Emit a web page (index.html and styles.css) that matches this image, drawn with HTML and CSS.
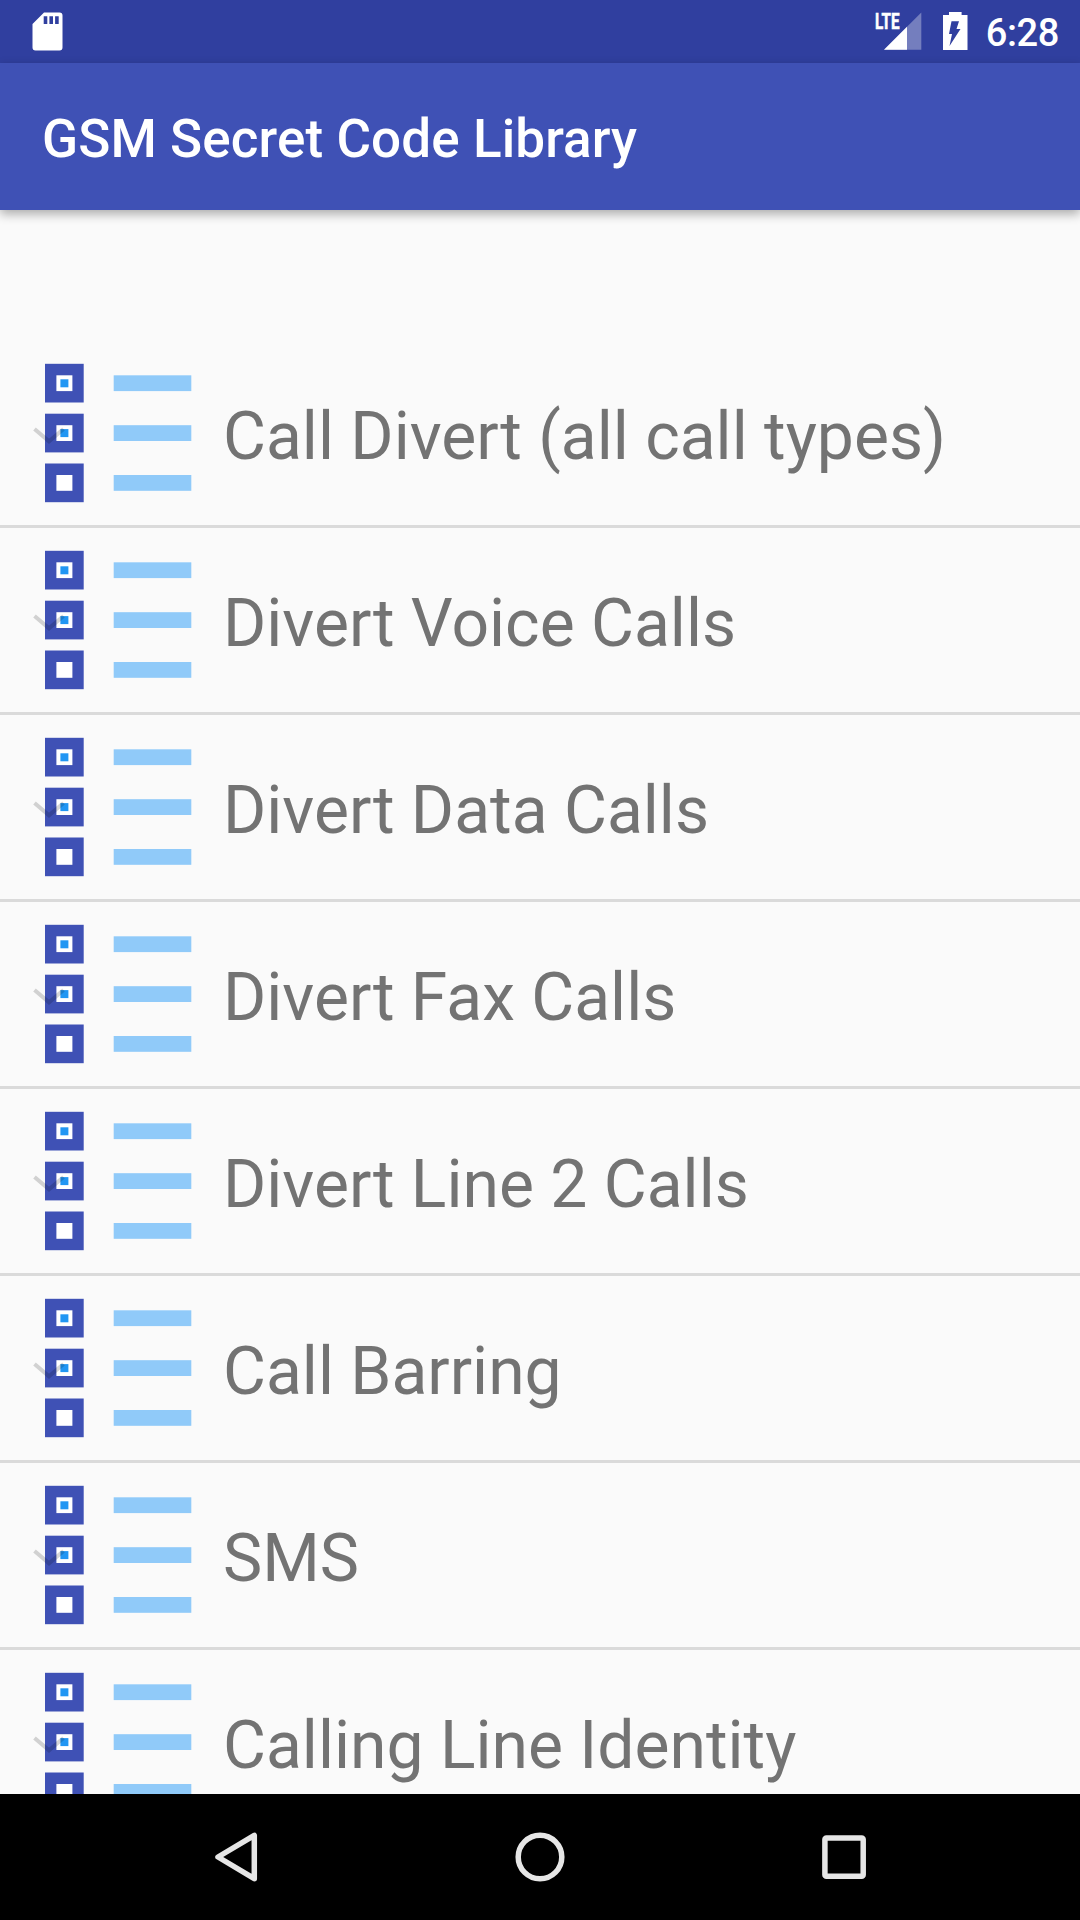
FILE: index.html
```
<!DOCTYPE html>
<html lang="en">
<head>
    <meta charset="UTF-8">
    <meta name="viewport" content="width=device-width, initial-scale=1.0">
    <title>GSM Secret Code Library</title>
    <link rel="stylesheet" href="styles.css">
</head>
<body>

    <svg class="defs" width="0" height="0">
        <symbol id="listIcon" viewBox="0 0 223 184">
            <g fill="#3f51b5">
                <rect x="45" y="22.8" width="38.7" height="38.7"/>
                <rect x="45" y="72.7" width="38.7" height="38.7"/>
                <rect x="45" y="122.5" width="38.7" height="38.7"/>
            </g>
            <g fill="#fff">
                <rect x="56.4" y="34.3" width="16" height="15.8"/>
                <rect x="56.4" y="84.2" width="16" height="15.8"/>
                <rect x="56.4" y="134" width="16" height="15.8"/>
            </g>
            <g fill="#2196f3">
                <rect x="60.4" y="38.3" width="8" height="8"/>
                <rect x="60.4" y="88.1" width="8" height="8"/>
            </g>
            <g fill="#90caf9">
                <rect x="113.7" y="34.3" width="77.6" height="15.8"/>
                <rect x="113.7" y="84.2" width="77.6" height="15.8"/>
                <rect x="113.7" y="134" width="77.6" height="15.8"/>
            </g>
            <path d="M34.5 88 49 100.3 63.5 88" fill="none" stroke="#000" stroke-opacity=".16" stroke-width="4"/>
        </symbol>
    </svg>

    <header id="statusBar">
        <svg class="sd" width="31" height="39" viewBox="0 0 31 39">
            <path d="M12 .5H27.5a3 3 0 0 1 3 3V35.5a3 3 0 0 1-3 3H3.5a3 3 0 0 1-3-3V12Z" fill="#fff"/>
            <path d="M11.7 4.2h3.6V12h-3.6zM17.4 4.2H21V12h-3.6zM23.1 4.2h3.6V12h-3.6z" fill="#303f9f"/>
        </svg>
        <svg class="signal" width="48" height="63" viewBox="0 0 48 63">
            <path d="M10 49.7 47.3 12.5V49.7Z" fill="#fff" fill-opacity=".33"/>
            <path d="M10 49.7 33 26.8V49.7Z" fill="#fff"/>
            <text x="1" y="29.300" textLength="24.500" lengthAdjust="spacingAndGlyphs">LTE</text>
        </svg>
        <svg class="battery" width="25" height="38" viewBox="0 0 25 38">
            <path d="M0 3H6V0H18.6V3H24.5V38H0Z" fill="#fff"/>
            <path d="M8.5 9.2H16L13.5 17H17.5L6.5 34 9 22H6Z" fill="#303f9f"/>
        </svg>
        <span class="clock">6:28</span>
    </header>

    <div id="appBar">
        <h1>GSM Secret Code Library</h1>
    </div>

    <ul id="codeList">
        <li><svg class="icon"><use href="#listIcon"/></svg><span>Call Divert (all call types)</span></li>
        <li><svg class="icon"><use href="#listIcon"/></svg><span>Divert Voice Calls</span></li>
        <li><svg class="icon"><use href="#listIcon"/></svg><span>Divert Data Calls</span></li>
        <li><svg class="icon"><use href="#listIcon"/></svg><span>Divert Fax Calls</span></li>
        <li><svg class="icon"><use href="#listIcon"/></svg><span>Divert Line 2 Calls</span></li>
        <li><svg class="icon"><use href="#listIcon"/></svg><span>Call Barring</span></li>
        <li><svg class="icon"><use href="#listIcon"/></svg><span>SMS</span></li>
        <li><svg class="icon"><use href="#listIcon"/></svg><span>Calling Line Identity</span></li>
    </ul>

    <nav id="navBar">
        <svg width="54" height="54" viewBox="0 0 54 54">
            <path d="M45.3 5.3V48.7L9 27Z"/>
        </svg>
        <svg width="54" height="54" viewBox="0 0 54 54">
            <circle cx="27" cy="27" r="21.8"/>
        </svg>
        <svg width="54" height="54" viewBox="0 0 54 54">
            <rect x="7.9" y="7.9" width="38.3" height="38.3" rx="1.5"/>
        </svg>
    </nav>

</body>
</html>
```
FILE: styles.css
```
body {
    display: flex;
    flex-direction: column;
    width: 1080px;
    height: 1920px;
    margin: 0;
    overflow: hidden;
    background-color: #fafafa;
    font-family: Roboto, sans-serif;
}

.defs {
    display: none;
}

#statusBar {
    display: flex;
    flex: none;
    height: 63px;
    box-sizing: border-box;
    padding: 0 21px 0 32px;
    background-color: #303f9f;
    color: white;
}

.sd {
    margin-top: 12px;
}

.signal {
    margin-left: auto;
}

.signal text {
    fill: white;
    stroke: white;
    stroke-width: 0.6px;
    font-size: 22.5px;
    font-weight: 700;
}

.battery {
    margin: 12px 18px 0 21px;
}

.clock {
    font-size: 38px;
    font-weight: 500;
    letter-spacing: -0.4px;
    line-height: 67px;
}

#appBar {
    display: flex;
    flex: none;
    align-items: center;
    position: relative;
    height: 147px;
    padding-left: 42px;
    background-color: #3f51b5;
    box-shadow: 0 4px 10px rgba(0, 0, 0, 0.32);
}

#appBar h1 {
    margin: 5px 0 0;
    color: white;
    font-size: 53px;
    font-weight: 500;
    letter-spacing: 0.1px;
    line-height: 62px;
}

#codeList {
    flex: 1;
    min-height: 0;
    margin: 0;
    padding: 131px 0 0;
    overflow: hidden;
    list-style: none;
}

#codeList li {
    display: flex;
    align-items: center;
    height: 184px;
    border-bottom: 3px solid #dadada;
}

#codeList .icon {
    flex: none;
    width: 223px;
    height: 184px;
}

#codeList span {
    padding-top: 8px;
    color: #737373;
    font-size: 66px;
    line-height: 78px;
}

#navBar {
    display: flex;
    flex: none;
    align-items: center;
    justify-content: center;
    gap: 250px;
    height: 126px;
    background-color: black;
}

#navBar svg {
    fill: none;
    stroke: #e6e6e6;
    stroke-width: 5.5;
    stroke-linejoin: round;
}
```
